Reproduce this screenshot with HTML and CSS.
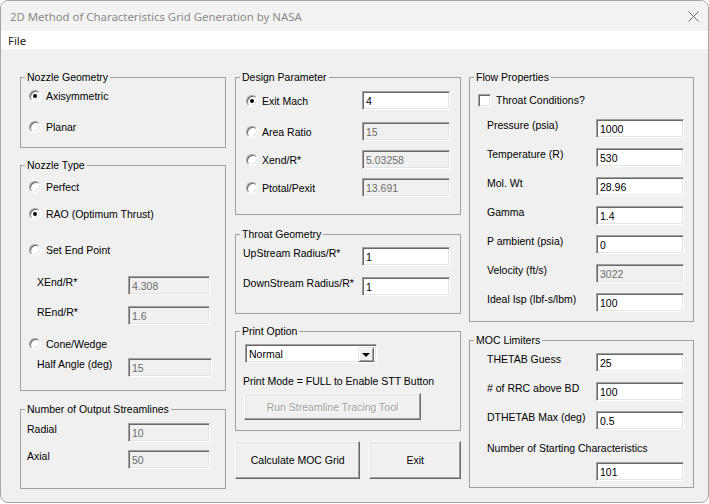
FILE: index.html
```html
<!DOCTYPE html>
<html>
<head>
<meta charset="utf-8">
<link rel="stylesheet" href="styles.css">
</head>
<body>
<div class="window">
  <div class="titlebar">
    <span class="title">2D Method of Characteristics Grid Generation by NASA</span>
    <svg class="close" width="11" height="11" viewBox="0 0 11 11"><path d="M0.5 0.5L10.5 10.5M10.5 0.5L0.5 10.5" stroke="#6a6a6a" stroke-width="1"/></svg>
  </div>
  <div class="menubar"><span>File</span></div>
  <div class="client">
    <div class="col col-left">
      <fieldset class="grp">
        <legend>Nozzle Geometry</legend>
        <div class="body geo">
          <div class="row"><span class="radio on"></span><span>Axisymmetric</span></div>
          <div class="row"><span class="radio"></span><span>Planar</span></div>
        </div>
      </fieldset>
      <fieldset class="grp fs-type">
        <legend>Nozzle Type</legend>
        <div class="body type">
          <div class="row"><span class="radio"></span><span>Perfect</span></div>
          <div class="row mt7"><span class="radio on"></span><span>RAO (Optimum Thrust)</span></div>
          <div class="row mt16"><span class="radio"></span><span>Set End Point</span></div>
          <div class="field mt16"><span class="lbl lbl-left">XEnd/R*</span><input class="tb w82" disabled value="4.308"></div>
          <div class="field mt11"><span class="lbl lbl-left">REnd/R*</span><input class="tb w82" disabled value="1.6"></div>
          <div class="row mt9"><span class="radio"></span><span>Cone/Wedge</span></div>
          <div class="field mt4"><span class="lbl lbl-left">Half Angle (deg)</span><input class="tb w84" disabled value="15"></div>
        </div>
      </fieldset>
      <fieldset class="grp fs-stream">
        <legend>Number of Output Streamlines</legend>
        <div class="body stream">
          <div class="field"><span class="lbl lbl-stream">Radial</span><input class="tb w82" disabled value="10"></div>
          <div class="field mt8"><span class="lbl lbl-stream">Axial</span><input class="tb w82" disabled value="50"></div>
        </div>
      </fieldset>
    </div>

    <div class="col col-mid">
      <fieldset class="grp">
        <legend>Design Parameter</legend>
        <div class="body design">
          <div class="field mid"><span class="opt"><span class="radio on"></span><span>Exit Mach</span></span><input class="tb w88" value="4"></div>
          <div class="field mid mt12"><span class="opt"><span class="radio"></span><span>Area Ratio</span></span><input class="tb w88" disabled value="15"></div>
          <div class="field mid mt9"><span class="opt"><span class="radio"></span><span>Xend/R*</span></span><input class="tb w88" disabled value="5.03258"></div>
          <div class="field mid mt9"><span class="opt"><span class="radio"></span><span>Ptotal/Pexit</span></span><input class="tb w88" disabled value="13.691"></div>
        </div>
      </fieldset>
      <fieldset class="grp fs-throat">
        <legend>Throat Geometry</legend>
        <div class="body throat">
          <div class="field"><span class="lbl lbl-throat">UpStream Radius/R*</span><input class="tb w88" value="1"></div>
          <div class="field mt11"><span class="lbl lbl-throat">DownStream Radius/R*</span><input class="tb w88" value="1"></div>
        </div>
      </fieldset>
      <fieldset class="grp fs-print">
        <legend>Print Option</legend>
        <div class="body print">
          <div class="combo"><span class="combo-text">Normal</span><span class="combo-btn"><span class="tri"></span></span></div>
          <div class="row note">Print Mode = FULL to Enable STT Button</div>
          <button class="btn stt" disabled>Run Streamline Tracing Tool</button>
        </div>
      </fieldset>
      <div class="actions">
        <button class="btn calc">Calculate MOC Grid</button>
        <button class="btn exit">Exit</button>
      </div>
    </div>

    <div class="col col-right">
      <fieldset class="grp">
        <legend>Flow Properties</legend>
        <div class="body flow">
          <div class="row"><span class="check"></span><span>Throat Conditions?</span></div>
          <div class="field mt9"><span class="lbl lbl-right">Pressure (psia)</span><input class="tb w88" value="1000"></div>
          <div class="field mt10"><span class="lbl lbl-right">Temperature (R)</span><input class="tb w88" value="530"></div>
          <div class="field mt10"><span class="lbl lbl-right">Mol. Wt</span><input class="tb w88" value="28.96"></div>
          <div class="field mt10"><span class="lbl lbl-right">Gamma</span><input class="tb w88" value="1.4"></div>
          <div class="field mt10"><span class="lbl lbl-right">P ambient (psia)</span><input class="tb w88" value="0"></div>
          <div class="field mt10"><span class="lbl lbl-right">Velocity (ft/s)</span><input class="tb w88" disabled value="3022"></div>
          <div class="field mt10"><span class="lbl lbl-right">Ideal Isp (lbf-s/lbm)</span><input class="tb w88" value="100"></div>
        </div>
      </fieldset>
      <fieldset class="grp fs-moc">
        <legend>MOC Limiters</legend>
        <div class="body moc">
          <div class="field"><span class="lbl lbl-right">THETAB Guess</span><input class="tb w88" value="25"></div>
          <div class="field mt10"><span class="lbl lbl-right"># of RRC above BD</span><input class="tb w88" value="100"></div>
          <div class="field mt10"><span class="lbl lbl-right">DTHETAB Max (deg)</span><input class="tb w88" value="0.5"></div>
          <div class="caption mt10">Number of Starting Characteristics</div>
          <div class="field mt6"><input class="tb w88 solo" value="101"></div>
        </div>
      </fieldset>
    </div>
  </div>
</div>
</body>
</html>
```

FILE: styles.css
```css
* { box-sizing: border-box; }

body {
  margin: 0;
  background: #ffffff;
  font-family: "Liberation Sans", Arial, sans-serif;
  font-size: 10.5px;
  color: #000;
}

.window {
  width: 709px;
  height: 503px;
  border: 1px solid #a6a6a6;
  border-radius: 8px;
  overflow: hidden;
  background: #f0f0f0;
  display: flex;
  flex-direction: column;
}

.titlebar {
  height: 30px;
  flex: none;
  background: #f3f3f3;
  display: flex;
  align-items: center;
  justify-content: space-between;
  padding: 0 9px 0 9px;
}

.title {
  font-family: "Noto Sans", "Open Sans", sans-serif;
  font-size: 11.4px;
  color: #8a8a8a;
}

.close { display: block; }

.menubar {
  height: 18px;
  flex: none;
  background: #fff;
  display: flex;
  align-items: center;
  padding-left: 7px;
  font-family: "Noto Sans", "Open Sans", sans-serif;
  font-size: 11.4px;
  color: #222;
}

.client {
  flex: 1;
  display: flex;
  align-items: flex-start;
  padding: 21px 0 0 19px;
}

.col { display: flex; flex-direction: column; }
.col-left { width: 206px; }
.col-mid { width: 226px; margin-left: 9px; }
.col-right { width: 225px; margin-left: 8px; }

.grp {
  margin: 0;
  padding: 0;
  border: 1px solid #a0a0a0;
  min-width: 0;
}

.grp legend {
  margin-left: 4px;
  padding: 0 2px;
  line-height: 14px;
  height: 14px;
}

.fs-type { margin-top: 10px; }
.fs-stream { margin-top: 11px; }
.fs-throat { margin-top: 12px; }
.fs-print { margin-top: 10px; }
.fs-moc { margin-top: 11px; }

.body { display: flex; flex-direction: column; }
.geo { padding: 2px 0 10px 8px; gap: 11px; }
.type { padding: 5px 0 13px 8px; }
.stream { padding: 7px 0 19px 6px; }
.design { padding: 7px 0 17px 10px; }
.throat { padding: 6px 0 17px 7px; }
.print { padding: 6px 0 10px 7px; align-items: flex-start; }
.flow { padding: 6px 0 9px 8px; }
.moc { padding: 6px 0 6px 8px; }

.mt4 { margin-top: 4px; }
.mt6 { margin-top: 6px; }
.mt7 { margin-top: 7px; }
.mt8 { margin-top: 8px; }
.mt9 { margin-top: 9px; }
.mt10 { margin-top: 10px; }
.mt11 { margin-top: 11px; }
.mt12 { margin-top: 12px; }
.mt16 { margin-top: 16px; }

.row {
  display: flex;
  align-items: center;
  height: 20px;
  gap: 5px;
}

.field {
  display: flex;
  align-items: flex-start;
  height: 19px;
}

.field.mid { align-items: center; }

.lbl { line-height: 13px; white-space: nowrap; }
.lbl-left { width: 91px; margin-left: 8px; }
.lbl-stream { width: 101px; }
.lbl-throat { width: 119px; }
.lbl-right { width: 109px; margin-left: 9px; }

.opt {
  width: 116px;
  display: flex;
  align-items: center;
  gap: 4px;
}

.caption { margin-left: 9px; height: 16px; line-height: 16px; }

.radio {
  width: 12px;
  height: 12px;
  flex: none;
  border-radius: 50%;
  background: #fff;
  border: 1px solid;
  border-color: #a0a0a0 #ffffff #ffffff #a0a0a0;
  box-shadow: inset 1px 1px 0 #696969, inset -1px -1px 0 #e3e3e3;
  position: relative;
}

.radio.on::after {
  content: "";
  position: absolute;
  left: 3px;
  top: 3px;
  width: 4px;
  height: 4px;
  border-radius: 50%;
  background: #000;
}

.check {
  width: 13px;
  height: 13px;
  flex: none;
  background: #fff;
  border: 1px solid;
  border-color: #a0a0a0 #ffffff #ffffff #a0a0a0;
  box-shadow: inset 1px 1px 0 #696969, inset -1px -1px 0 #e3e3e3;
  margin-right: 0;
}

.tb {
  height: 19px;
  margin: 0;
  padding: 1px 0 0 3px;
  font-family: inherit;
  font-size: 10.5px;
  color: #000;
  background: #fff;
  border: 1px solid;
  border-color: #a0a0a0 #ffffff #ffffff #a0a0a0;
  box-shadow: inset 1px 1px 0 #696969, inset -1px -1px 0 #e3e3e3;
  outline: none;
  flex: none;
}

.tb.solo { margin-left: 118px; }

.tb:disabled {
  background: #f0f0f0;
  color: #6d6d6d;
  -webkit-text-fill-color: #6d6d6d;
  opacity: 1;
}

.w82 { width: 82px; }
.w84 { width: 84px; }
.w88 { width: 88px; }

.combo {
  margin-left: 2px;
  width: 132px;
  height: 19px;
  display: flex;
  background: #fff;
  border: 1px solid;
  border-color: #a0a0a0 #ffffff #ffffff #a0a0a0;
  box-shadow: inset 1px 1px 0 #696969, inset -1px -1px 0 #e3e3e3;
  padding: 2px;
}

.combo-text {
  flex: 1;
  line-height: 15px;
  padding-left: 1px;
}

.combo-btn {
  width: 16px;
  height: 15px;
  background: #f0f0f0;
  border: 1px solid;
  border-color: #e3e3e3 #696969 #696969 #e3e3e3;
  box-shadow: inset 1px 1px 0 #fff, inset -1px -1px 0 #a0a0a0;
  display: flex;
  align-items: center;
  justify-content: center;
}

.tri {
  width: 0;
  height: 0;
  border-left: 4px solid transparent;
  border-right: 4px solid transparent;
  border-top: 4px solid #000;
  margin-top: 1px;
}

.note { margin-top: 8px; }

.btn {
  margin: 0;
  padding: 0;
  font-family: inherit;
  font-size: 10.5px;
  color: #000;
  background: #f0f0f0;
  border: 1px solid;
  border-color: #ffffff #696969 #696969 #ffffff;
  box-shadow: inset -1px -1px 0 #a0a0a0, inset 1px 1px 0 #e3e3e3;
}

.stt {
  margin: 2px 0 0 1px;
  width: 177px;
  height: 27px;
  color: #a0a0a0;
  text-shadow: 1px 1px 0 #fff;
}

.actions {
  display: flex;
  margin-top: 10px;
  gap: 9px;
}

.calc { width: 126px; height: 38px; }
.exit { width: 92px; height: 38px; }
```
